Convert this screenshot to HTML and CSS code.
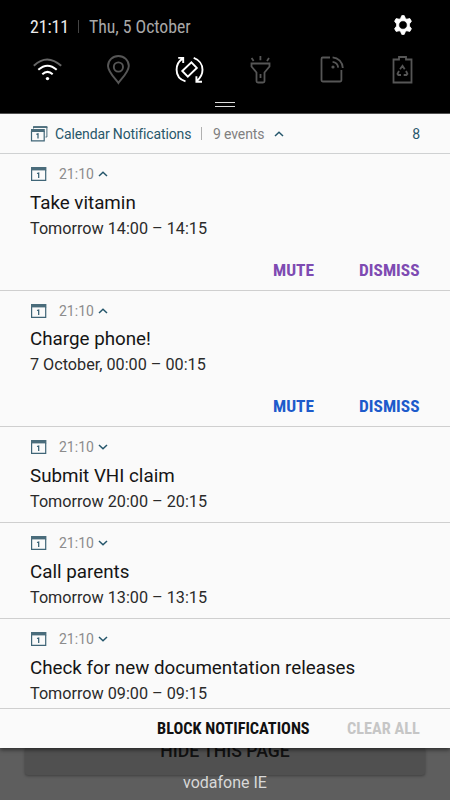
FILE: index.html
```
<!DOCTYPE html>
<html lang="en">

<head>
  <meta charset="utf-8">
  <meta name="viewport" content="width=device-width, initial-scale=1.0">
  <title>Calendar Notifications</title>
  <link rel="stylesheet" href="styles.css">
</head>

<body>
  <!-- shared icons -->
  <svg class="defs" width="0" height="0">
    <symbol id="cal" viewBox="0 0 17 14">
      <path d="M1.6 3V13.3H15.7V3" fill="none" stroke="#3f6577" stroke-width="1.2"/>
      <rect x="1" y="0" width="15.4" height="3.4" fill="#4a6c7b"/>
      <path d="M7 6.5L8.7 6V11" fill="none" stroke="#2f5a6e" stroke-width="1.2"/>
    </symbol>
    <symbol id="up" viewBox="0 0 10 6">
      <path d="M1 5L5 1.2L9 5" fill="none" stroke="#24566b" stroke-width="1.5"/>
    </symbol>
    <symbol id="down" viewBox="0 0 10 6">
      <path d="M1 1L5 4.8L9 1" fill="none" stroke="#24566b" stroke-width="1.5"/>
    </symbol>
  </svg>

  <header class="status">
    <div class="status-top">
      <span class="clock">21:11</span>
      <span class="sep"></span>
      <span class="date">Thu, 5 October</span>
      <svg class="gear" width="20" height="20" viewBox="0 0 20 20">
        <path fill="#fff" stroke="#fff" stroke-width="0.8" stroke-linejoin="round" fill-rule="evenodd" d="M8.8 0.6h2.4l1.2 2.8 1.4.8 3.1-.6 1.5 2.7-2 2.6v2.2l2 2.6-1.5 2.7-3.1-.6-1.4.8-1.2 2.8H8.8l-1.2-2.8-1.4-.8-3.1.6-1.5-2.7 2-2.6V8.9L1.6 6.3l1.5-2.7 3.1.6 1.4-.8zM10 5.7a4.3 4.3 0 1 0 0 8.6a4.3 4.3 0 1 0 0-8.6z"/>
      </svg>
    </div>
    <div class="toggles">
      <svg width="32" height="32" viewBox="0 0 32 32" fill="none" stroke="#fff" stroke-width="2">
        <path d="M2.8 11.8Q16 -0.8 30.2 11.8" stroke="#666"/>
        <path d="M7.3 15.8Q16.5 7.6 25.7 15.8M11.3 20.3Q16.5 15.4 21.7 20.3"/>
        <circle cx="16.5" cy="24.6" r="1.7" fill="#fff" stroke="none"/>
      </svg>
      <svg width="32" height="32" viewBox="0 0 32 32" fill="none" stroke="#565656" stroke-width="1.9">
        <path d="M16.4 29C14 25.5 6 18 6 12A10.4 10 0 0 1 26.8 12C26.8 18 18.8 25.5 16.4 29Z"/>
        <circle cx="16.4" cy="13" r="4.6"/>
      </svg>
      <svg width="32" height="32" viewBox="0 0 32 32" fill="none" stroke="#fff" stroke-width="1.9">
        <path d="M12.5 27.4C6.5 25.5 3.6 21 3.6 15.7C3.6 11 5.7 7.2 9.5 4.6M5.2 3.9H10.2V9"/>
        <path d="M20.7 3.9C26 5.7 29.5 10.4 29.5 15.7C29.5 20 27.2 24 23.9 26.7M29 27.8H23.4V22.2"/>
        <path d="M9.3 17L18.4 8.4L23.8 13.9L14.8 22.7Z"/>
      </svg>
      <svg width="32" height="32" viewBox="0 0 32 32" fill="none" stroke="#565656" stroke-width="1.8">
        <path d="M7.6 4L9.6 7M16.4 2V6.3M25 4L23 7"/>
        <path d="M7.5 9.5H25.5V12.5L20.5 18.5V27.3Q20.5 28.5 19 28.5H14Q12.5 28.5 12.5 27.3V18.5L7.5 12.5ZM16.5 20V24"/>
      </svg>
      <svg width="32" height="32" viewBox="0 0 32 32" fill="none" stroke="#565656" stroke-width="1.8">
        <path d="M15 3.5H7.7Q6.5 3.5 6.5 4.9V26.3Q6.5 27.5 7.7 27.5H25.2Q26.4 27.5 26.4 26.3V16"/>
        <path d="M17.6 3.3A11 11 0 0 1 27.8 14M17.6 7.8A6.5 6.5 0 0 1 23.2 13.6"/>
        <circle cx="18" cy="13" r="1.6" fill="#565656" stroke="none"/>
      </svg>
      <svg width="32" height="32" viewBox="0 0 32 32" fill="none" stroke="#565656" stroke-width="1.8">
        <path d="M7.5 5.5H13V3H20V5.5H25.5V28.5H7.5Z"/>
        <path d="M14 15.2L16.5 11.8L18.7 15.2M20 17L21.4 19.8L20.4 21H17.7M15 21H12.4L11.5 19.8L13 17"/>
      </svg>
    </div>
    <div class="handle"></div>
  </header>

  <main class="panel">
    <div class="group">
      <svg class="stack" width="18" height="16" viewBox="0 0 18 16" fill="none">
        <path d="M3.5 2.5V0.7H16.9V11H15.5" stroke="#4a6c7b"/>
        <path d="M3 1.2H17.4" stroke="#4a6c7b" stroke-width="1.5"/>
        <path d="M1.5 5V14.9H14.2V5" stroke="#3f6577" stroke-width="1.2"/>
        <rect x="1" y="3" width="13.8" height="3" fill="#4a6c7b"/>
        <path d="M6.4 8.4L8 7.9V12.6" stroke="#2f5a6e" stroke-width="1.2"/>
      </svg>
      <span class="app">Calendar Notifications</span>
      <span class="bar"></span>
      <span class="events">9 events</span>
      <svg class="chev" width="10" height="6"><use href="#up"/></svg>
      <span class="count">8</span>
    </div>

    <section class="item">
      <div class="meta">
        <svg width="17" height="14"><use href="#cal"/></svg>
        <span class="time">21:10</span>
        <svg class="chev" width="10" height="6"><use href="#up"/></svg>
      </div>
      <div class="title">Take vitamin</div>
      <div class="when">Tomorrow 14:00 – 14:15</div>
      <div class="actions purple"><span class="mute">MUTE</span><span class="dismiss">DISMISS</span></div>
    </section>

    <section class="item">
      <div class="meta">
        <svg width="17" height="14"><use href="#cal"/></svg>
        <span class="time">21:10</span>
        <svg class="chev" width="10" height="6"><use href="#up"/></svg>
      </div>
      <div class="title">Charge phone!</div>
      <div class="when">7 October, 00:00 – 00:15</div>
      <div class="actions blue"><span class="mute">MUTE</span><span class="dismiss">DISMISS</span></div>
    </section>

    <section class="item">
      <div class="meta">
        <svg width="17" height="14"><use href="#cal"/></svg>
        <span class="time">21:10</span>
        <svg class="chev" width="10" height="6"><use href="#down"/></svg>
      </div>
      <div class="title">Submit VHI claim</div>
      <div class="when">Tomorrow 20:00 – 20:15</div>
    </section>

    <section class="item">
      <div class="meta">
        <svg width="17" height="14"><use href="#cal"/></svg>
        <span class="time">21:10</span>
        <svg class="chev" width="10" height="6"><use href="#down"/></svg>
      </div>
      <div class="title">Call parents</div>
      <div class="when">Tomorrow 13:00 – 13:15</div>
    </section>

    <section class="item last">
      <div class="meta">
        <svg width="17" height="14"><use href="#cal"/></svg>
        <span class="time">21:10</span>
        <svg class="chev" width="10" height="6"><use href="#down"/></svg>
      </div>
      <div class="title">Check for new documentation releases</div>
      <div class="when">Tomorrow 09:00 – 09:15</div>
    </section>

    <div class="bottom"><span class="block">BLOCK NOTIFICATIONS</span><span class="clear">CLEAR ALL</span></div>
  </main>

  <footer class="behind">
    <div class="page-button">HIDE THIS PAGE</div>
    <div class="carrier">vodafone IE</div>
  </footer>
</body>

</html>
```

FILE: styles.css
```
* {
  box-sizing: border-box;
}

body {
  margin: 0;
  width: 450px;
  height: 800px;
  overflow: hidden;
  background: #5e5e5e;
  font-family: Roboto, sans-serif;
  color: #111;
}

svg {
  display: block;
  flex: none;
}

.defs {
  position: absolute;
}

/* quick settings */
.status {
  height: 114px;
  background: #000;
  border-bottom: 1px solid #555;
}
.status-top {
  display: flex;
  align-items: center;
  height: 54px;
  padding: 0 37px 2px 30px;
  font-size: 17.8px;
  font-stretch: 75%;
  letter-spacing: -0.05px;
  white-space: nowrap;
}
.clock {
  width: 39px;
  color: #ececec;
}
.sep {
  width: 1px;
  height: 13px;
  margin: 0 10px 0 9px;
  background: #444;
}
.date {
  color: #a8a8a8;
}
.gear {
  margin-left: auto;
  margin-bottom: 2px;
}
.toggles {
  display: flex;
  justify-content: space-between;
  padding: 0 32px 0 31px;
}
.handle {
  width: 20px;
  height: 5px;
  margin: 16px auto 0;
  border-top: 1px solid #ddd;
  border-bottom: 1px solid #ddd;
}

/* notification list */
.panel {
  position: relative;
  height: 634px;
  background: #fafafa;
  box-shadow: 0 2px 4px rgba(0, 0, 0, 0.5);
}
.group {
  display: flex;
  align-items: center;
  height: 40px;
  padding: 0 30px;
  border-bottom: 1px solid #cfd1d2;
  font-size: 14px;
  letter-spacing: -0.13px;
}
.app {
  width: 135px;
  margin-left: 7px;
  color: #28576a;
  white-space: nowrap;
}
.bar {
  width: 1px;
  height: 13px;
  margin: 0 11px;
  background: #b0b0b0;
}
.events {
  width: 52px;
  color: #808080;
  white-space: nowrap;
}
.group .chev {
  margin-left: 9px;
}
.count {
  margin-left: auto;
  color: #28576a;
}

.item {
  padding: 11px 30px 0;
  height: 96px;
  border-bottom: 1px solid #cfcfcf;
  white-space: nowrap;
}
.item:has(.actions) {
  height: 136.5px;
}
.meta {
  display: flex;
  align-items: center;
  height: 18px;
}
.time {
  width: 34px;
  margin: 0 5px 0 12px;
  font-size: 14px;
  color: #8c8c8c;
}
.title {
  height: 28px;
  margin-top: 5.7px;
  line-height: 28px;
  font-size: 18.8px;
  color: #151515;
}
.when {
  height: 24px;
  line-height: 24px;
  font-size: 16.2px;
  color: #2a2a2a;
}
.actions {
  display: flex;
  justify-content: flex-end;
  height: 24px;
  margin-top: 17px;
  line-height: 24px;
  font-size: 17.4px;
  font-weight: 700;
  font-stretch: 75%;
}
.mute {
  width: 41px;
  margin-right: 45px;
}
.dismiss {
  width: 61px;
}
.purple {
  color: #7e4bb2;
}
.blue {
  color: #1d5bcb;
}
.last {
  height: 90px;
}

.bottom {
  display: flex;
  justify-content: flex-end;
  height: 39px;
  padding: 0 30px;
  line-height: 39px;
  font-size: 16.3px;
  font-weight: 700;
  font-stretch: 75%;
  white-space: nowrap;
}
.block {
  width: 153px;
  margin-right: 37px;
}
.clear {
  width: 73px;
  color: #c6c6c6;
}

/* dimmed page under the panel */
.behind {
  text-align: center;
}
.page-button {
  height: 27px;
  margin: 0 25px;
  line-height: 6px;
  border-radius: 0 0 3px 3px;
  background: #505050;
  box-shadow: 0 1px 3px rgba(0, 0, 0, 0.35);
  font-size: 17.6px;
  font-weight: 500;
  color: #111;
}
.carrier {
  line-height: 16px;
  font-size: 16px;
  color: #d8d8d8;
}
```
